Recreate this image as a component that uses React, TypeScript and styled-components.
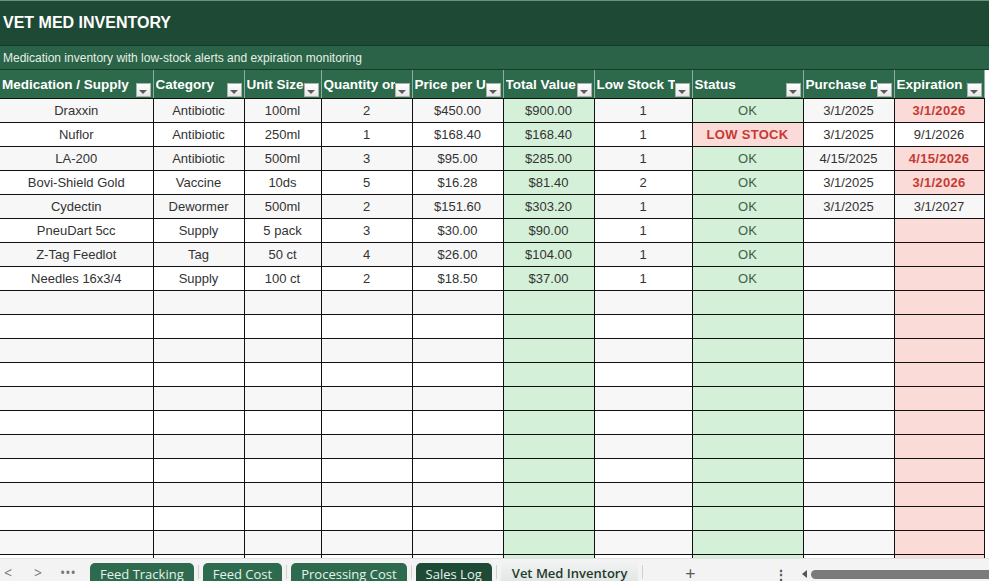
import { createGlobalStyle, styled } from 'styled-components';

const GlobalStyle = createGlobalStyle`
	html, body {
		margin: 0;
		padding: 0;
		background: #ffffff;
	}
	body {
		font-family: 'Liberation Sans', Arial, sans-serif;
	}
`;

type Row = {
	name: string;
	category: string;
	unit: string;
	qty: string;
	price: string;
	total: string;
	low: string;
	status: 'OK' | 'LOW STOCK';
	purchase: string;
	expiration: string;
	expiring: boolean;
};

const rows: Row[] = [
	{ name: 'Draxxin', category: 'Antibiotic', unit: '100ml', qty: '2', price: '$450.00', total: '$900.00', low: '1', status: 'OK', purchase: '3/1/2025', expiration: '3/1/2026', expiring: true },
	{ name: 'Nuflor', category: 'Antibiotic', unit: '250ml', qty: '1', price: '$168.40', total: '$168.40', low: '1', status: 'LOW STOCK', purchase: '3/1/2025', expiration: '9/1/2026', expiring: false },
	{ name: 'LA-200', category: 'Antibiotic', unit: '500ml', qty: '3', price: '$95.00', total: '$285.00', low: '1', status: 'OK', purchase: '4/15/2025', expiration: '4/15/2026', expiring: true },
	{ name: 'Bovi-Shield Gold', category: 'Vaccine', unit: '10ds', qty: '5', price: '$16.28', total: '$81.40', low: '2', status: 'OK', purchase: '3/1/2025', expiration: '3/1/2026', expiring: true },
	{ name: 'Cydectin', category: 'Dewormer', unit: '500ml', qty: '2', price: '$151.60', total: '$303.20', low: '1', status: 'OK', purchase: '3/1/2025', expiration: '3/1/2027', expiring: false },
	{ name: 'PneuDart 5cc', category: 'Supply', unit: '5 pack', qty: '3', price: '$30.00', total: '$90.00', low: '1', status: 'OK', purchase: '', expiration: '', expiring: true },
	{ name: 'Z-Tag Feedlot', category: 'Tag', unit: '50 ct', qty: '4', price: '$26.00', total: '$104.00', low: '1', status: 'OK', purchase: '', expiration: '', expiring: true },
	{ name: 'Needles 16x3/4', category: 'Supply', unit: '100 ct', qty: '2', price: '$18.50', total: '$37.00', low: '1', status: 'OK', purchase: '', expiration: '', expiring: true },
];

const columns = [
	{ label: 'Medication / Supply', width: 153 },
	{ label: 'Category', width: 91 },
	{ label: 'Unit Size', width: 77 },
	{ label: 'Quantity on Hand', width: 91 },
	{ label: 'Price per Unit', width: 91 },
	{ label: 'Total Value', width: 91 },
	{ label: 'Low Stock Threshold', width: 98 },
	{ label: 'Status', width: 111 },
	{ label: 'Purchase Date', width: 91 },
	{ label: 'Expiration Date', width: 90 },
];

const EMPTY_ROWS = 12;

const Page = styled.div`
	width: 989px;
	height: 581px;
	display: flex;
	flex-direction: column;
	overflow: hidden;
`;

const TitleBar = styled.div`
	height: 44px;
	flex: none;
	display: flex;
	align-items: center;
	padding-left: 3px;
	background: #1e4a35;
	border-top: 1px solid #6f8f7f;
	border-bottom: 1px solid #163828;
	color: #ffffff;
	font-size: 16px;
	font-weight: bold;
`;

const Subtitle = styled.div`
	height: 23px;
	flex: none;
	display: flex;
	align-items: center;
	padding-left: 3px;
	background: #2a6347;
	border-bottom: 1px solid #173a29;
	color: #e4f1e6;
	font-size: 12px;
`;

const GridArea = styled.div`
	flex: 1;
	overflow: hidden;
	background: #ffffff;
`;

const Sheet = styled.table`
	border-collapse: collapse;
	table-layout: fixed;
	width: 984px;
	font-size: 13px;
	color: #333333;
`;

const HeadCell = styled.th`
	height: 28px;
	padding: 0 0 0 2px;
	background: #2d6a4c;
	border-right: 1px solid #8fb09f;
	border-bottom: 1px solid #111111;
	color: #ffffff;
	font-size: 13.5px;
	font-weight: bold;
	text-align: left;
	vertical-align: middle;
`;

const HeadInner = styled.div`
	display: flex;
	align-items: flex-end;
	height: 28px;
`;

const HeadLabel = styled.span`
	flex: 1;
	min-width: 0;
	align-self: center;
	padding-top: 1px;
	white-space: nowrap;
	overflow: hidden;
`;

const FilterButton = styled.span`
	flex: none;
	width: 15px;
	height: 14px;
	margin: 0 2px 1px 0;
	background: linear-gradient(#ffffff, #e6e6e6);
	border: 1px solid #a9b3ad;
	display: flex;
	align-items: flex-end;
	justify-content: center;
	padding-bottom: 2px;
	box-sizing: border-box;

	&::after {
		content: '';
		border-left: 4px solid transparent;
		border-right: 4px solid transparent;
		border-top: 4px solid #5a5a5a;
	}
`;

type Tone = 'plain' | 'green' | 'pink';

const toneBg = (tone: Tone, striped: boolean) => {
	if (tone === 'green') return '#d5f0d9';
	if (tone === 'pink') return '#fadbd8';
	return striped ? '#f7f7f7' : '#ffffff';
};

const Cell = styled.td<{ $tone?: Tone; $striped: boolean; $alert?: boolean }>`
	height: 23px;
	padding: 0 2px;
	border: 1px solid #111111;
	border-top: none;
	text-align: center;
	white-space: nowrap;
	overflow: hidden;
	background: ${(p) => toneBg(p.$tone ?? 'plain', p.$striped)};
	color: ${(p) => (p.$alert ? '#c63a33' : 'inherit')};
	font-weight: ${(p) => (p.$alert ? 'bold' : 'normal')};
	letter-spacing: ${(p) => (p.$alert ? '0.3px' : '0')};

	&:first-child {
		border-left: none;
	}
`;

const StatusCell = styled(Cell)`
	color: ${(p) => (p.$alert ? '#c63a33' : '#3c5f48')};
`;

const TabBar = styled.div`
	height: 22px;
	flex: none;
	display: flex;
	align-items: flex-start;
	background: #f3f3f3;
	border-top: 1px solid #e2e2e2;
	overflow: hidden;
	font-family: 'Open Sans', 'Noto Sans', sans-serif;
`;

const NavGroup = styled.div`
	flex: none;
	display: flex;
	margin: 0 7px 0 -7px;
`;

const NavButton = styled.span`
	width: 30px;
	height: 22px;
	flex: none;
	display: flex;
	align-items: center;
	justify-content: center;
	color: #777777;
	font-size: 14px;
	padding-top: 5px;
	box-sizing: border-box;
`;

type TabVariant = 'normal' | 'dark' | 'active';

const Tab = styled.span<{ $variant: TabVariant }>`
	flex: none;
	height: 24px;
	padding: 0 ${(p) => (p.$variant === 'active' ? '11px' : '10px')};
	display: flex;
	align-items: flex-start;
	box-sizing: border-box;
	border-radius: 5px 5px 0 0;
	font-size: 13px;
	white-space: nowrap;
	background: ${(p) =>
		p.$variant === 'active'
			? 'linear-gradient(#f2f4f3, #dfe4e1)'
			: p.$variant === 'dark'
				? '#1f4b36'
				: '#2e6b4e'};
	color: ${(p) => (p.$variant === 'active' ? '#1f3a2c' : '#e6f2ea')};
	font-weight: ${(p) => (p.$variant === 'active' ? 600 : 400)};
	margin-top: ${(p) => (p.$variant === 'active' ? '2px' : '4px')};
	padding-top: ${(p) => (p.$variant === 'active' ? '3px' : '2px')};
`;

const TabDivider = styled.span`
	flex: none;
	width: 1px;
	height: 14px;
	margin: 6px 4px 0;
	background: #d0d0d0;
`;

const AddSheet = styled.span`
	width: 86px;
	flex: none;
	display: flex;
	justify-content: center;
	color: #555555;
	font-size: 18px;
	line-height: 18px;
	padding-top: 5px;
`;

const MoreMenu = styled.span`
	width: 16px;
	margin-left: 40px;
	flex: none;
	display: flex;
	justify-content: center;
	color: #555555;
	font-size: 14px;
	font-weight: bold;
	padding-top: 6px;
`;

const ScrollTrack = styled.div`
	flex: 1;
	display: flex;
	align-items: center;
	gap: 4px;
	margin: 10px 0 0 13px;
	height: 10px;
`;

const ScrollArrow = styled.span`
	flex: none;
	width: 0;
	height: 0;
	border-top: 4px solid transparent;
	border-bottom: 4px solid transparent;
	border-right: 5px solid #555555;
`;

const ScrollThumb = styled.span`
	flex: 1;
	height: 9px;
	border-radius: 5px 0 0 5px;
	background: #7b7b7b;
`;

const tabs: { label: string; variant: TabVariant }[] = [
	{ label: 'Feed Tracking', variant: 'normal' },
	{ label: 'Feed Cost', variant: 'normal' },
	{ label: 'Processing Cost', variant: 'normal' },
	{ label: 'Sales Log', variant: 'dark' },
	{ label: 'Vet Med Inventory', variant: 'active' },
];

const App = () => {
	const blanks = Array.from({ length: EMPTY_ROWS });

	return (
		<Page>
			<GlobalStyle />
			<TitleBar>VET MED INVENTORY</TitleBar>
			<Subtitle>Medication inventory with low-stock alerts and expiration monitoring</Subtitle>
			<GridArea>
				<Sheet>
					<colgroup>
						{columns.map((c) => (
							<col key={c.label} style={{ width: c.width }} />
						))}
					</colgroup>
					<thead>
						<tr>
							{columns.map((c) => (
								<HeadCell key={c.label}>
									<HeadInner>
										<HeadLabel>{c.label}</HeadLabel>
										<FilterButton />
									</HeadInner>
								</HeadCell>
							))}
						</tr>
					</thead>
					<tbody>
						{rows.map((r, i) => {
							const striped = i % 2 === 0;
							return (
								<tr key={r.name}>
									<Cell $striped={striped}>{r.name}</Cell>
									<Cell $striped={striped}>{r.category}</Cell>
									<Cell $striped={striped}>{r.unit}</Cell>
									<Cell $striped={striped}>{r.qty}</Cell>
									<Cell $striped={striped}>{r.price}</Cell>
									<Cell $striped={striped} $tone='green'>{r.total}</Cell>
									<Cell $striped={striped}>{r.low}</Cell>
									<StatusCell
										$striped={striped}
										$tone={r.status === 'OK' ? 'green' : 'pink'}
										$alert={r.status !== 'OK'}
									>
										{r.status}
									</StatusCell>
									<Cell $striped={striped}>{r.purchase}</Cell>
									<Cell
										$striped={striped}
										$tone={r.expiring ? 'pink' : 'plain'}
										$alert={r.expiring && r.expiration !== ''}
									>
										{r.expiration}
									</Cell>
								</tr>
							);
						})}
						{blanks.map((_, i) => {
							const striped = (rows.length + i) % 2 === 0;
							return (
								<tr key={`blank-${i}`}>
									{columns.map((c, ci) => (
										<Cell
											key={c.label}
											$striped={striped}
											$tone={ci === 5 || ci === 7 ? 'green' : ci === 9 ? 'pink' : 'plain'}
										/>
									))}
								</tr>
							);
						})}
					</tbody>
				</Sheet>
			</GridArea>
			<TabBar>
				<NavGroup>
					<NavButton>&lt;</NavButton>
					<NavButton>&gt;</NavButton>
					<NavButton>•••</NavButton>
				</NavGroup>
				{tabs.map((t, i) => (
					<span key={t.label} style={{ display: 'contents' }}>
						{i > 0 && <TabDivider />}
						<Tab $variant={t.variant}>{t.label}</Tab>
					</span>
				))}
				<TabDivider />
				<AddSheet>+</AddSheet>
				<MoreMenu>⋮</MoreMenu>
				<ScrollTrack>
					<ScrollArrow />
					<ScrollThumb />
				</ScrollTrack>
			</TabBar>
		</Page>
	);
};

export default App;
